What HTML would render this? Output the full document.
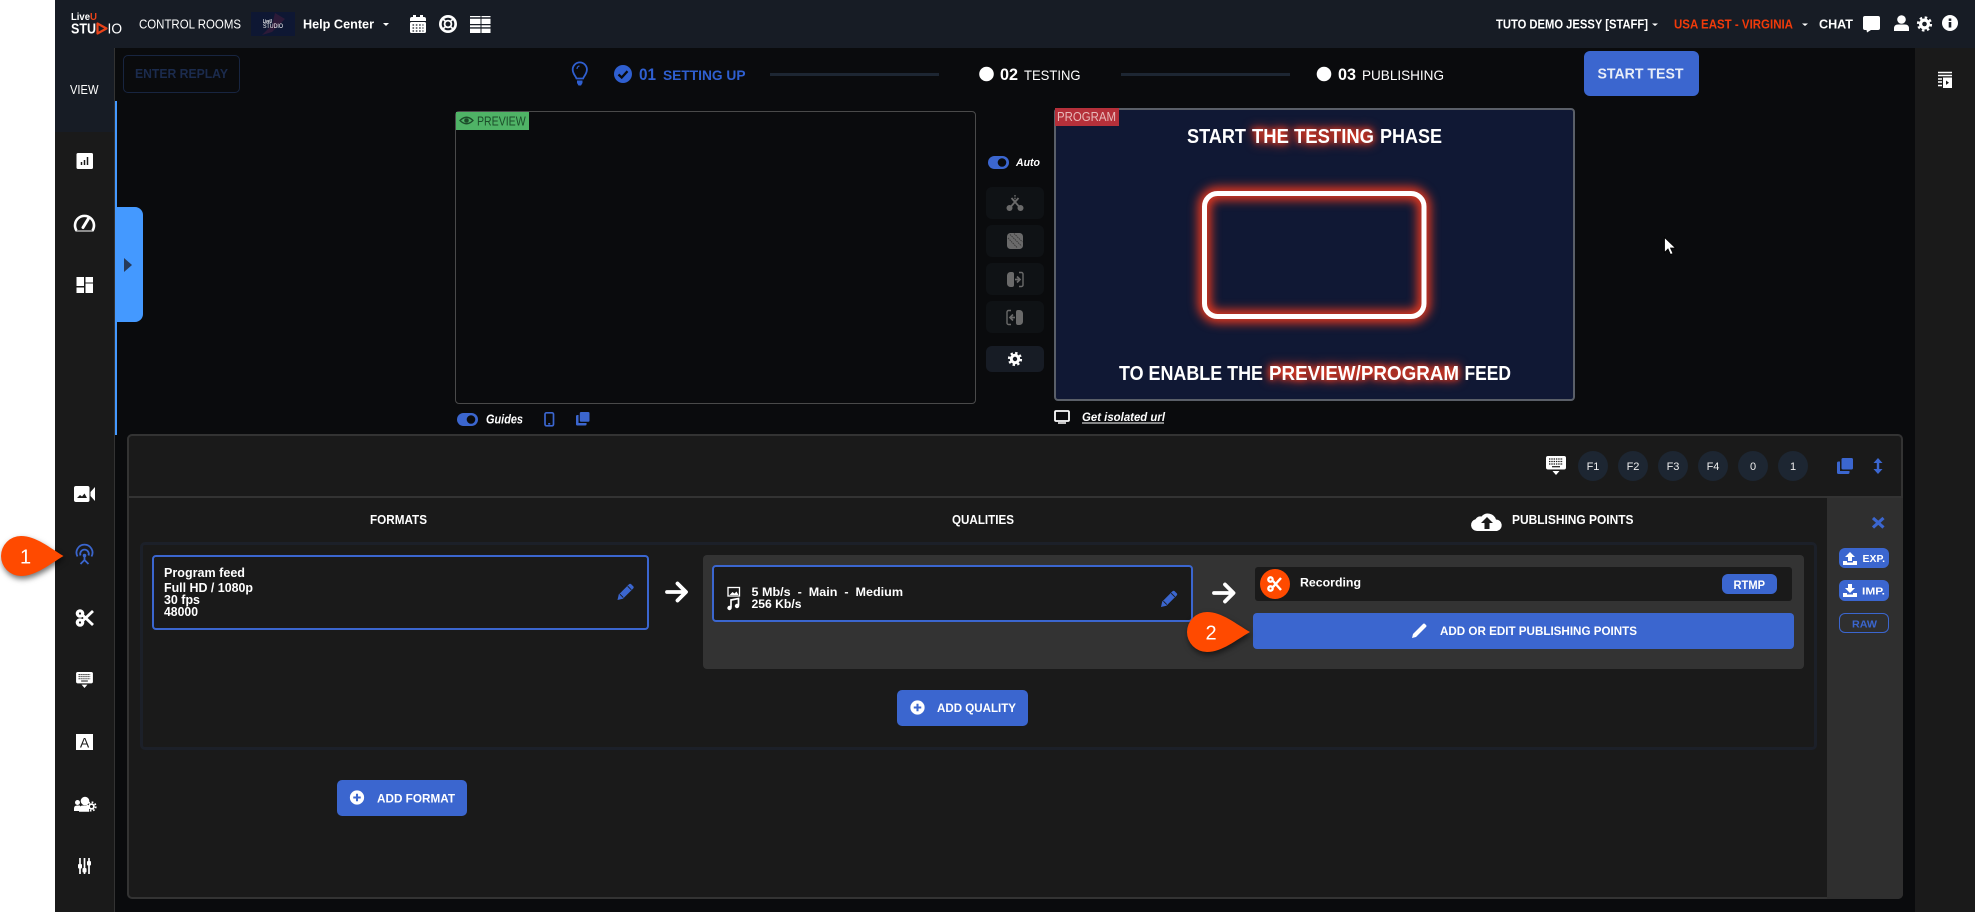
<!DOCTYPE html>
<html><head><meta charset="utf-8"><title>LiveU Studio</title>
<style>
html,body{margin:0;padding:0;width:1975px;height:912px;overflow:hidden;background:#fff;font-family:"Liberation Sans",sans-serif}
.b{position:absolute;box-sizing:border-box}
svg{position:absolute;left:0;top:0}
text{font-family:"Liberation Sans",sans-serif;fill:#fff}
.bd{font-weight:700}
.glow{filter:drop-shadow(0 0 3px #e8391f) drop-shadow(0 0 5px #e8391f)}
</style></head><body>
<div class="b" style="left:55px;top:0;width:1920px;height:912px;background:#0a0b0d"></div>
<div class="b" style="left:55px;top:0;width:1920px;height:48px;background:#171c25"></div>
<div class="b" style="left:55px;top:48px;width:60px;height:864px;background:#1a1a1a;border-right:1px solid #333"></div>
<div class="b" style="left:55px;top:48px;width:59px;height:84px;background:#171c25"></div>
<div class="b" style="left:115px;top:101px;width:2px;height:334px;background:#4499ff"></div>
<div class="b" style="left:115px;top:207px;width:28px;height:115px;background:#4499ff;border-radius:0 8px 8px 0"></div>
<div class="b" style="left:1915px;top:48px;width:60px;height:864px;background:#1a1a1a"></div>
<div class="b" style="left:251px;top:12px;width:44px;height:24px;background:#0e1733"></div>
<div class="b" style="left:123px;top:55px;width:117px;height:38px;border:1px solid #182540;border-radius:5px"></div>
<div class="b" style="left:1584px;top:51px;width:115px;height:45px;background:#3b66cf;border-radius:6px"></div>
<div class="b" style="left:455px;top:111px;width:521px;height:293px;border:1px solid #4a4a4a;border-radius:4px"></div>
<div class="b" style="left:456px;top:112px;width:73px;height:18px;background:#4fb366"></div>
<div class="b" style="left:1054px;top:108px;width:521px;height:293px;background:#101834;border:2px solid #5a5f68;border-radius:4px"></div>
<div class="b" style="left:1055px;top:108px;width:64px;height:18px;background:#b5303a"></div>
<div class="b" style="left:986px;top:187px;width:58px;height:32px;background:#0f1215;border-radius:6px"></div>
<div class="b" style="left:986px;top:225px;width:58px;height:32px;background:#0f1215;border-radius:6px"></div>
<div class="b" style="left:986px;top:263px;width:58px;height:32px;background:#0f1215;border-radius:6px"></div>
<div class="b" style="left:986px;top:301px;width:58px;height:32px;background:#0f1215;border-radius:6px"></div>
<div class="b" style="left:986px;top:346px;width:58px;height:26px;background:#171c25;border-radius:6px"></div>
<div class="b" style="left:127px;top:434px;width:1776px;height:465px;background:#1a1a1a;border:2px solid #333;border-radius:5px"></div>
<div class="b" style="left:129px;top:496px;width:1772px;height:2px;background:#333"></div>
<div class="b" style="left:1827px;top:498px;width:76px;height:401px;background:#2f2f2f;border-radius:0 0 5px 0"></div>
<div class="b" style="left:140px;top:542px;width:1677px;height:208px;border:3px solid #1c2029;border-radius:5px"></div>
<div class="b" style="left:152px;top:555px;width:497px;height:75px;border:2px solid #3b66cf;border-radius:4px"></div>
<div class="b" style="left:703px;top:555px;width:1101px;height:114px;background:#333;border-radius:4px"></div>
<div class="b" style="left:712px;top:565px;width:481px;height:57px;background:#1a1a1a;border:2px solid #3b66cf;border-radius:4px"></div>
<div class="b" style="left:1255px;top:567px;width:537px;height:34px;background:#1a1a1a;border-radius:3px"></div>
<div class="b" style="left:1260px;top:569px;width:30px;height:30px;background:#ff4a00;border-radius:50%"></div>
<div class="b" style="left:1722px;top:574px;width:55px;height:20px;background:#3b66cf;border-radius:6px"></div>
<div class="b" style="left:1253px;top:613px;width:541px;height:36px;background:#3b66cf;border-radius:4px"></div>
<div class="b" style="left:897px;top:690px;width:131px;height:36px;background:#3b66cf;border-radius:5px"></div>
<div class="b" style="left:337px;top:780px;width:130px;height:36px;background:#3b66cf;border-radius:5px"></div>
<div class="b" style="left:1578px;top:451px;width:30px;height:30px;background:#1d2632;border-radius:50%"></div>
<div class="b" style="left:1618px;top:451px;width:30px;height:30px;background:#1d2632;border-radius:50%"></div>
<div class="b" style="left:1658px;top:451px;width:30px;height:30px;background:#1d2632;border-radius:50%"></div>
<div class="b" style="left:1698px;top:451px;width:30px;height:30px;background:#1d2632;border-radius:50%"></div>
<div class="b" style="left:1738px;top:451px;width:30px;height:30px;background:#1d2632;border-radius:50%"></div>
<div class="b" style="left:1778px;top:451px;width:30px;height:30px;background:#1d2632;border-radius:50%"></div>
<div class="b" style="left:1839px;top:548px;width:50px;height:20px;background:#3b66cf;border-radius:6px"></div>
<div class="b" style="left:1839px;top:580px;width:50px;height:21px;background:#3b66cf;border-radius:6px"></div>
<div class="b" style="left:1839px;top:613px;width:50px;height:20px;border:1px solid #3b66cf;border-radius:6px"></div>

<svg width="1975" height="912" viewBox="0 0 1975 912" xmlns="http://www.w3.org/2000/svg">
<defs>
<symbol id="pen" viewBox="0 0 17 17"><path d="M0 17 1.2 11.6 11.5 1.3a1.6 1.6 0 0 1 2.2 0l2 2a1.6 1.6 0 0 1 0 2.2L5.4 15.8Z" fill="#3b66cf"/><path d="M10.2 3.2 13.8 6.8M2.4 11.2 5.8 14.6" stroke="#1a1a1a" stroke-width=".9"/></symbol>
<symbol id="plus" viewBox="0 0 16 16"><circle cx="8" cy="8" r="7.6" fill="#fff"/><path d="M8 4v8M4 8h8" stroke="#3b66cf" stroke-width="2.2"/></symbol>
<symbol id="kb" viewBox="0 0 20 19"><rect x="0" y="0" width="20" height="13.5" rx="2" fill="#fff"/><path d="M3 3h14M3 5.500h14M3 8h14" stroke="#1a1a1a" stroke-width="1.3" stroke-dasharray="1.4 .9"/><path d="M6 10.700h8" stroke="#1a1a1a" stroke-width="1.2"/><path d="M6.500 15h7L10 19Z" fill="#fff"/></symbol>
<symbol id="copy" viewBox="0 0 16 16"><rect x="4.5" y="0" width="11.5" height="11.5" rx="1.5" fill="#3b66cf"/><path d="M3 3.500V13h9.500v1.500a1.500 1.500 0 0 1-1.500 1.500H1.500A1.500 1.500 0 0 1 0 14.500V5A1.500 1.500 0 0 1 1.500 3.500Z" fill="#3b66cf"/></symbol>
</defs>

<!-- logo -->
<text x="71" y="20" font-size="10" textLength="19" lengthAdjust="spacingAndGlyphs" class="bd">Live</text>
<text x="90" y="20" font-size="10" textLength="7" lengthAdjust="spacingAndGlyphs" class="bd" style="fill:#e8431a">U</text>
<text x="71" y="33.500" font-size="15" textLength="25" lengthAdjust="spacingAndGlyphs" class="bd">STU</text>
<path d="M97.500 23.500v10l9-5Z" fill="none" stroke="#e8431a" stroke-width="2.200" stroke-linejoin="round"/>
<text x="107.500" y="33.500" font-size="15" textLength="14.500" lengthAdjust="spacingAndGlyphs">IO</text>
<text x="139" y="28.500" font-size="13" textLength="102" lengthAdjust="spacingAndGlyphs">CONTROL ROOMS</text>
<path d="M275 13 285 19 272 32 262 35 272 25Z" fill="#3a1c3a" opacity=".7"/>
<text x="263" y="23" font-size="5" textLength="9" lengthAdjust="spacingAndGlyphs" class="bd">LiveU</text>
<text x="263" y="28" font-size="6" textLength="20" lengthAdjust="spacingAndGlyphs">STUDIO</text>
<text x="303" y="28.500" font-size="12.500" textLength="71" lengthAdjust="spacingAndGlyphs" class="bd">Help Center</text>
<path d="M383 23h6l-3 3Z" fill="#fff"/>
<!-- calendar -->
<path d="M410 19a2 2 0 0 1 2-2h1v-2h3v2h4v-2h3v2h1a2 2 0 0 1 2 2v2h-16Z" fill="#fff"/><rect x="410" y="22" width="16" height="11" rx="1.500" fill="#fff"/>
<path d="M412.500 25h11M412.500 28h11M412.500 31h11" stroke="#171c25" stroke-width="1.300" stroke-dasharray="1.600 1.700"/>
<!-- lifering -->
<circle cx="448" cy="24" r="9" fill="#fff"/><circle cx="448" cy="24" r="6.300" fill="#171c25"/><circle cx="448" cy="24" r="4.300" fill="#fff"/><circle cx="448" cy="24" r="2.500" fill="#171c25"/><path d="M442.500 18.500l3 3M453.500 18.500l-3 3M442.500 29.500l3-3M453.500 29.500l-3-3" stroke="#fff" stroke-width="1.600"/>
<!-- grid -->
<path d="M470 16h10.500v1.300H470zM481.500 16H490.500v1.300H481.500zM470 18.700h10.500V24H470zM481.500 18.700H490.500V24H481.500zM470 25.200h10.500v2H470zM481.500 25.200H490.500v2H481.500zM470 28.600h10.500V33H470zM481.500 28.600H490.500V33H481.500z" fill="#fff"/>

<text x="1496" y="28.500" font-size="12.500" textLength="152" lengthAdjust="spacingAndGlyphs" class="bd">TUTO DEMO JESSY [STAFF]</text>
<path d="M1652 23.500h6l-3 2.500Z" fill="#fff"/>
<text x="1674" y="28.500" font-size="12.500" textLength="119" lengthAdjust="spacingAndGlyphs" class="bd" style="fill:#f03a0a">USA EAST - VIRGINIA</text>
<path d="M1802 23.500h6l-3 2.500Z" fill="#fff"/>
<text x="1819" y="28.500" font-size="12.500" textLength="34" lengthAdjust="spacingAndGlyphs" class="bd">CHAT</text>
<path d="M1865 16h13a2 2 0 0 1 2 2v10a2 2 0 0 1-2 2h-7l-4 2.500-.5-2.500h-1.500a2 2 0 0 1-2-2V18a2 2 0 0 1 2-2Z" fill="#fff"/>
<circle cx="1901.500" cy="19.500" r="4.300" fill="#fff"/><path d="M1894 31v-2.500q0-4 4-4h7q4 0 4 4V31Z" fill="#fff"/>
<g transform="translate(1924.500,24)"><circle r="5.500" fill="#fff"/><circle r="6.500" fill="none" stroke="#fff" stroke-width="2.200" stroke-dasharray="2.550 2.550"/><circle r="2.300" fill="#171c25"/></g>
<circle cx="1950" cy="23" r="8" fill="#fff"/><rect x="1948.700" y="22" width="2.600" height="5.500" fill="#171c25"/><rect x="1948.700" y="18.500" width="2.600" height="2.400" fill="#171c25"/>

<!-- left nav -->
<text x="70" y="94" font-size="13" textLength="28.500" lengthAdjust="spacingAndGlyphs">VIEW</text>
<rect x="76.500" y="153" width="16.500" height="16" rx="1.500" fill="#fff"/><path d="M81.500 162v3M84.500 160v5M87.500 157v8" stroke="#1a1a1a" stroke-width="1.500"/>
<path d="M76.500 230.500a9.500 9.500 0 1 1 16 0" fill="none" stroke="#fff" stroke-width="2.600"/><path d="M75.500 231h18" stroke="#fff" stroke-width="1"/><path d="M83 227.500 88.500 218.500" stroke="#fff" stroke-width="3" stroke-linecap="round"/>
<path d="M76.500 277h7.500v9h-7.500zM85.500 277H93v5.500h-7.500zM76.500 287.500h7.500v5.500h-7.500zM85.500 283.500H93V293h-7.500z" fill="#fff"/>
<rect x="74" y="486" width="15.500" height="16" rx="2" fill="#fff"/><path d="M90.500 492 95 487v14l-4.500-5Z" fill="#fff"/><path d="M77 498l3-3 2 1.500 2.500-3 2.500 4.500Z" fill="#1a1a1a"/>
<g fill="none" stroke="#3b66cf" stroke-width="1.800"><path d="M77.500 556.500a8 8 0 1 1 14 0"/><path d="M80.500 555.500a4.300 4.300 0 1 1 8 0"/><path d="M84.500 556v4M84.500 560l-4 4M84.500 560l4 4"/></g><circle cx="84.500" cy="555.500" r="1.800" fill="#3b66cf"/>
<g fill="none" stroke="#fff"><circle cx="80" cy="613.500" r="2.700" stroke-width="3.200"/><circle cx="80" cy="622.500" r="2.700" stroke-width="3.200"/><path d="M83 615.500 93 625M83 620.500 93 611" stroke-width="2.800"/></g>
<use href="#kb" x="76" y="672" width="17" height="16"/>
<rect x="76" y="734" width="17" height="16" fill="#fff"/><text x="84.500" y="747.500" font-size="14" text-anchor="middle" style="fill:#1a1a1a">A</text>
<circle cx="85" cy="801" r="4.300" fill="#fff"/><circle cx="77.500" cy="802.500" r="2.500" fill="#fff"/><path d="M74 811v-2.500q0-3 3-3h3v5.500ZM79 811.800v-2.300q0-4 4-4h6v6.300Z" fill="#fff"/>
<g transform="translate(91.500,806.500)"><circle r="3.300" fill="#fff"/><circle r="4.300" fill="none" stroke="#fff" stroke-width="1.700" stroke-dasharray="1.690 1.690"/><circle r="1.500" fill="#1a1a1a"/></g>
<path d="M80 858v16M84.500 858v16M89 858v16" stroke="#fff" stroke-width="1.700"/><rect x="78" y="864" width="4" height="4.500" rx="1" fill="#fff"/><rect x="82.500" y="868" width="4" height="4.500" rx="1" fill="#fff"/><rect x="87" y="861" width="4" height="4.500" rx="1" fill="#fff"/>

<path d="M124 258v14l8-7Z" fill="#263a5a"/>
<!-- replay & steps -->
<text x="135" y="78" font-size="13" textLength="93" lengthAdjust="spacingAndGlyphs" class="bd" style="fill:#1b2b4d">ENTER REPLAY</text>
<path d="M576.500 78.500c-1-3-3.800-4.500-3.800-9a7.100 7.100 0 0 1 14.200 0c0 4.500-2.800 6-3.800 9Z" fill="none" stroke="#2f5fd0" stroke-width="1.800"/><path d="M577 80.500h5.500v2.500l-1.500 2.500h-2.500L577 83Z" fill="#2f5fd0"/><path d="M577 69a3 3 0 0 1 2.500-3" stroke="#2f5fd0" fill="none" stroke-width="1.200"/>
<circle cx="623" cy="74" r="9" fill="#2f5fd0"/><path d="M618.500 74.500l3.200 3 5.800-6.300" fill="none" stroke="#0a0b0d" stroke-width="2.300"/>
<text x="639" y="80" font-size="17" textLength="17" lengthAdjust="spacingAndGlyphs" class="bd" style="fill:#2f5fd0">01</text>
<text x="663" y="80" font-size="14" textLength="82.500" lengthAdjust="spacingAndGlyphs" class="bd" style="fill:#2f5fd0">SETTING UP</text>
<rect x="770" y="73" width="169" height="3" fill="#1d2632"/>
<circle cx="986.500" cy="74" r="7.300" fill="#fff"/>
<text x="1000" y="80" font-size="17" textLength="18" lengthAdjust="spacingAndGlyphs" class="bd">02</text>
<text x="1024" y="80" font-size="14" textLength="56.500" lengthAdjust="spacingAndGlyphs">TESTING</text>
<rect x="1121" y="73" width="169" height="3" fill="#1d2632"/>
<circle cx="1324" cy="74" r="7.300" fill="#fff"/>
<text x="1338" y="80" font-size="17" textLength="18" lengthAdjust="spacingAndGlyphs" class="bd">03</text>
<text x="1362" y="80" font-size="14" textLength="82" lengthAdjust="spacingAndGlyphs">PUBLISHING</text>
<text x="1597.500" y="78.500" font-size="14.500" textLength="86" lengthAdjust="spacingAndGlyphs" class="bd" style="fill:#e8edf8">START TEST</text>
<!-- right nav -->
<path d="M1938 72.500h14M1938 75.500h14M1938 79h4M1938 82h4M1938 85.500h4" stroke="#fff" stroke-width="1.600"/><rect x="1943" y="77.500" width="9" height="10.500" fill="#fff"/><path d="M1946 80.500l3 2.200-3 2.200Z" fill="#1a1a1a"/>
<!-- cursor -->
<path d="M1664.500 237.500v15l3.500-3.500 2.500 5.500 2.500-1-2.500-5.500h5Z" fill="#fff" stroke="#000" stroke-width=".8"/>

<!-- preview -->
<path d="M460 120.500q6.500-6.500 13 0q-6.500 6.500-13 0Z" fill="none" stroke="#1c4d2a" stroke-width="1.300"/><circle cx="466.500" cy="120.500" r="2.300" fill="#1c4d2a"/>
<text x="477" y="125.500" font-size="13" textLength="48.700" lengthAdjust="spacingAndGlyphs" style="fill:#1c4d2a">PREVIEW</text>
<rect x="457" y="413" width="21" height="13" rx="6.500" fill="#3b66cf"/><circle cx="471" cy="419.500" r="4.300" fill="#0a0b0d"/>
<text x="486" y="423.300" font-size="12.500" textLength="37" lengthAdjust="spacingAndGlyphs" font-style="italic" class="bd">Guides</text>
<rect x="545" y="412.800" width="8.500" height="13" rx="1.500" fill="none" stroke="#3b66cf" stroke-width="1.700"/><rect x="548.200" y="423" width="2" height="1.600" fill="#3b66cf"/>
<use href="#copy" x="576" y="412" width="13.500" height="13.500"/>
<!-- switcher -->
<rect x="988" y="156" width="21" height="13" rx="6.500" fill="#3b66cf"/><circle cx="1002" cy="162.500" r="4.300" fill="#0a0b0d"/>
<text x="1016" y="166" font-size="11" textLength="24" lengthAdjust="spacingAndGlyphs" font-style="italic" class="bd">Auto</text>
<g stroke="#6a6a6a" fill="#6a6a6a"><circle cx="1009.500" cy="208" r="3" stroke="none"/><circle cx="1020.500" cy="208" r="3" stroke="none"/><path d="M1011 206.500 1018.500 198M1019 206.500 1011.500 198" stroke-width="1.800"/><path d="M1015 195v6" stroke-width="1.400" stroke-dasharray="1.600 1"/></g>
<rect x="1007" y="233" width="16" height="16" rx="3.500" fill="#6a6a6a"/><path d="M1010 234.500 1021.500 246M1008 238 1017.500 248M1014 233.500 1022.500 242" stroke="#3b3b3b" stroke-width="1" stroke-dasharray="1.500 .8"/>
<path d="M1012 272h-1.500a3.500 3.500 0 0 0-3.500 3.500v8a3.500 3.500 0 0 0 3.500 3.500h1.500a2 2 0 0 0 2-2v-11a2 2 0 0 0-2-2Z" fill="#6a6a6a"/><path d="M1019 272.500h2.500a1.500 1.500 0 0 1 1.500 1.500v11a1.500 1.500 0 0 1-1.500 1.500H1019" fill="none" stroke="#6a6a6a" stroke-width="1.400"/><path d="M1015 279.500h4M1017 276.500l3 3-3 3" fill="none" stroke="#6a6a6a" stroke-width="1.700"/>
<path d="M1018 310h1.500a3.500 3.500 0 0 1 3.500 3.500v8a3.500 3.500 0 0 1-3.500 3.500H1018a2 2 0 0 1-2-2v-11a2 2 0 0 1 2-2Z" fill="#6a6a6a"/><path d="M1011 310.500h-2.500a1.500 1.500 0 0 0-1.500 1.500v11a1.500 1.500 0 0 0 1.500 1.500h2.500" fill="none" stroke="#6a6a6a" stroke-width="1.400"/><path d="M1015 317.500h-4M1013 314.500l-3 3 3 3" fill="none" stroke="#6a6a6a" stroke-width="1.700"/>
<g transform="translate(1015,359)"><circle r="5.200" fill="#fff"/><circle r="6" fill="none" stroke="#fff" stroke-width="2.200" stroke-dasharray="2.360 2.350"/><circle r="2.200" fill="#171c25"/></g>

<!-- program -->
<text x="1057" y="121" font-size="13" textLength="59" lengthAdjust="spacingAndGlyphs" style="fill:#e8b9b9">PROGRAM</text>
<text x="1187" y="143" font-size="20" textLength="59" lengthAdjust="spacingAndGlyphs" class="bd">START</text>
<text x="1252" y="143" font-size="20" textLength="122" lengthAdjust="spacingAndGlyphs" class="bd glow">THE TESTING</text>
<text x="1380" y="143" font-size="20" textLength="62" lengthAdjust="spacingAndGlyphs" class="bd">PHASE</text>
<rect x="1204.500" y="193.500" width="219.500" height="123" rx="13" fill="none" stroke="#e8391f" stroke-width="13" style="filter:blur(5px)"/>
<rect x="1204.500" y="193.500" width="219.500" height="123" rx="13" fill="none" stroke="#fff" stroke-width="5"/>
<text x="1119" y="380" font-size="20" textLength="144" lengthAdjust="spacingAndGlyphs" class="bd">TO ENABLE THE</text>
<text x="1269" y="380" font-size="20" textLength="190" lengthAdjust="spacingAndGlyphs" class="bd glow">PREVIEW/PROGRAM</text>
<text x="1464.500" y="380" font-size="20" textLength="46.500" lengthAdjust="spacingAndGlyphs" class="bd">FEED</text>
<rect x="1055" y="411" width="14" height="10" rx="1" fill="none" stroke="#fff" stroke-width="1.800"/><path d="M1058 423h8" stroke="#fff" stroke-width="1.500"/>
<text x="1082" y="421" font-size="12" textLength="83" lengthAdjust="spacingAndGlyphs" font-style="italic" class="bd">Get isolated url</text>
<rect x="1082" y="422.500" width="82" height="1" fill="#fff"/>

<!-- panel header -->
<use href="#kb" x="1546" y="456" width="20" height="19"/>
<g font-size="11" text-anchor="middle">
<text x="1593" y="470" style="fill:#eee">F1</text><text x="1633" y="470" style="fill:#eee">F2</text><text x="1673" y="470" style="fill:#eee">F3</text><text x="1713" y="470" style="fill:#eee">F4</text><text x="1753" y="470" style="fill:#eee">0</text><text x="1793" y="470" style="fill:#eee">1</text></g>
<use href="#copy" x="1837" y="458" width="16" height="16"/>
<path d="M1878 461v10" stroke="#3b66cf" stroke-width="2.400"/><path d="M1873.500 463 1878 458l4.500 5ZM1873.500 469l4.500 5 4.500-5Z" fill="#3b66cf"/>

<text x="370" y="524" font-size="12.500" textLength="57" lengthAdjust="spacingAndGlyphs" class="bd">FORMATS</text>
<text x="952" y="524" font-size="12.500" textLength="62" lengthAdjust="spacingAndGlyphs" class="bd">QUALITIES</text>
<path d="M1477 531a6 6 0 0 1-1.500-11.800 6 6 0 0 1 6-2.700 8.500 8.500 0 0 1 14.500 3 5.800 5.800 0 0 1 1 11.500Z" fill="#fff"/><path d="M1481 523l6-6 6 6h-3.500v6h-5v-6Z" fill="#1a1a1a"/>
<text x="1512" y="524" font-size="12.500" textLength="121.500" lengthAdjust="spacingAndGlyphs" class="bd">PUBLISHING POINTS</text>

<!-- format card -->
<g class="bd" font-size="12.500">
<text x="164" y="577" textLength="81" lengthAdjust="spacingAndGlyphs">Program feed</text>
<text x="164" y="592" textLength="89" lengthAdjust="spacingAndGlyphs">Full HD / 1080p</text>
<text x="164" y="604" textLength="36" lengthAdjust="spacingAndGlyphs">30 fps</text>
<text x="164" y="616" textLength="34" lengthAdjust="spacingAndGlyphs">48000</text>
</g>
<use href="#pen" x="617.500" y="583" width="17" height="17"/>
<path d="M667 592H685M677.500 583.500l8.500 8.500-8.500 8.500" fill="none" stroke="#fff" stroke-width="3.800" stroke-linejoin="round" stroke-linecap="round"/>

<!-- quality card -->
<rect x="728" y="587.500" width="11.500" height="8.500" fill="none" stroke="#fff" stroke-width="1.300"/><path d="M729.500 595l3-3 2 1.500 2-2 2 3.500Z" fill="#fff"/>
<path d="M731 607.500v-7.500l7.500-1.500v7" fill="none" stroke="#fff" stroke-width="1.700"/><circle cx="729.500" cy="608" r="2.200" fill="#fff"/><circle cx="737" cy="606" r="2.200" fill="#fff"/>
<g class="bd" font-size="12">
<text x="751.500" y="596" textLength="151.500" lengthAdjust="spacingAndGlyphs" xml:space="preserve">5 Mb/s  -  Main  -  Medium</text>
<text x="751.500" y="608" textLength="50" lengthAdjust="spacingAndGlyphs">256 Kb/s</text>
</g>
<use href="#pen" x="1161" y="590" width="17" height="17"/>
<path d="M1214 593H1233M1225 584.500l8.500 8.500-8.500 8.500" fill="none" stroke="#fff" stroke-width="3.800" stroke-linejoin="round" stroke-linecap="round"/>

<!-- recording -->
<g fill="none" stroke="#fff"><circle cx="1270.500" cy="579.500" r="2.200" stroke-width="2.300"/><circle cx="1270.500" cy="588.500" r="2.200" stroke-width="2.300"/><path d="M1273 581 1281 590M1273 587 1281 578" stroke-width="2.400"/></g>
<text x="1300" y="586.500" font-size="12" textLength="61" lengthAdjust="spacingAndGlyphs" class="bd">Recording</text>
<text x="1733.500" y="589" font-size="11.500" textLength="31.500" lengthAdjust="spacingAndGlyphs" class="bd">RTMP</text>
<path d="M1412 638 1413 634 1423 624a1.400 1.400 0 0 1 2 0l1 1a1.400 1.400 0 0 1 0 2L1416 637Z" fill="#fff"/>
<text x="1440" y="635" font-size="11.500" textLength="197" lengthAdjust="spacingAndGlyphs" class="bd">ADD OR EDIT PUBLISHING POINTS</text>
<use href="#plus" x="910" y="700" width="15" height="15"/>
<text x="937" y="712" font-size="11.500" textLength="79" lengthAdjust="spacingAndGlyphs" class="bd">ADD QUALITY</text>
<use href="#plus" x="349.500" y="790" width="15" height="15"/>
<text x="377" y="802.500" font-size="11.500" textLength="78" lengthAdjust="spacingAndGlyphs" class="bd">ADD FORMAT</text>

<!-- side -->
<path d="M1873 518l10.500 9.500M1883.500 518l-10.500 9.500" stroke="#3b66cf" stroke-width="3.200"/>
<path d="M1850 552l5 5h-3v4h-4v-4h-3ZM1843 561h4v1.500h6V561h4v4h-14Z" fill="#fff"/>
<text x="1862.500" y="562" font-size="10.500" textLength="22.500" lengthAdjust="spacingAndGlyphs" class="bd">EXP.</text>
<path d="M1848 584h4v4h3l-5 5-5-5h3ZM1843 593h4v1.500h6V593h4v4h-14Z" fill="#fff"/>
<text x="1862" y="594.500" font-size="10.500" textLength="23" lengthAdjust="spacingAndGlyphs" class="bd">IMP.</text>
<text x="1852" y="627.500" font-size="10.500" textLength="25" lengthAdjust="spacingAndGlyphs" class="bd" style="fill:#3b66cf">RAW</text>

<!-- callouts -->
<g style="filter:drop-shadow(1px 3px 3px rgba(0,0,0,.55))">
<path d="M21 536C36 536 50 548 63.500 556 50 564 36 576 21 576A20 20 0 0 1 21 536Z" fill="#ff4a00"/>
<path d="M1207 612C1222 612 1236 624 1250 632 1236 640 1222 652 1207 652A20 20 0 0 1 1207 612Z" fill="#ff4a00"/>
</g>
<text x="25.500" y="563.500" font-size="20" text-anchor="middle">1</text>
<text x="1211" y="639.500" font-size="20" text-anchor="middle">2</text>
</svg>
</body></html>
